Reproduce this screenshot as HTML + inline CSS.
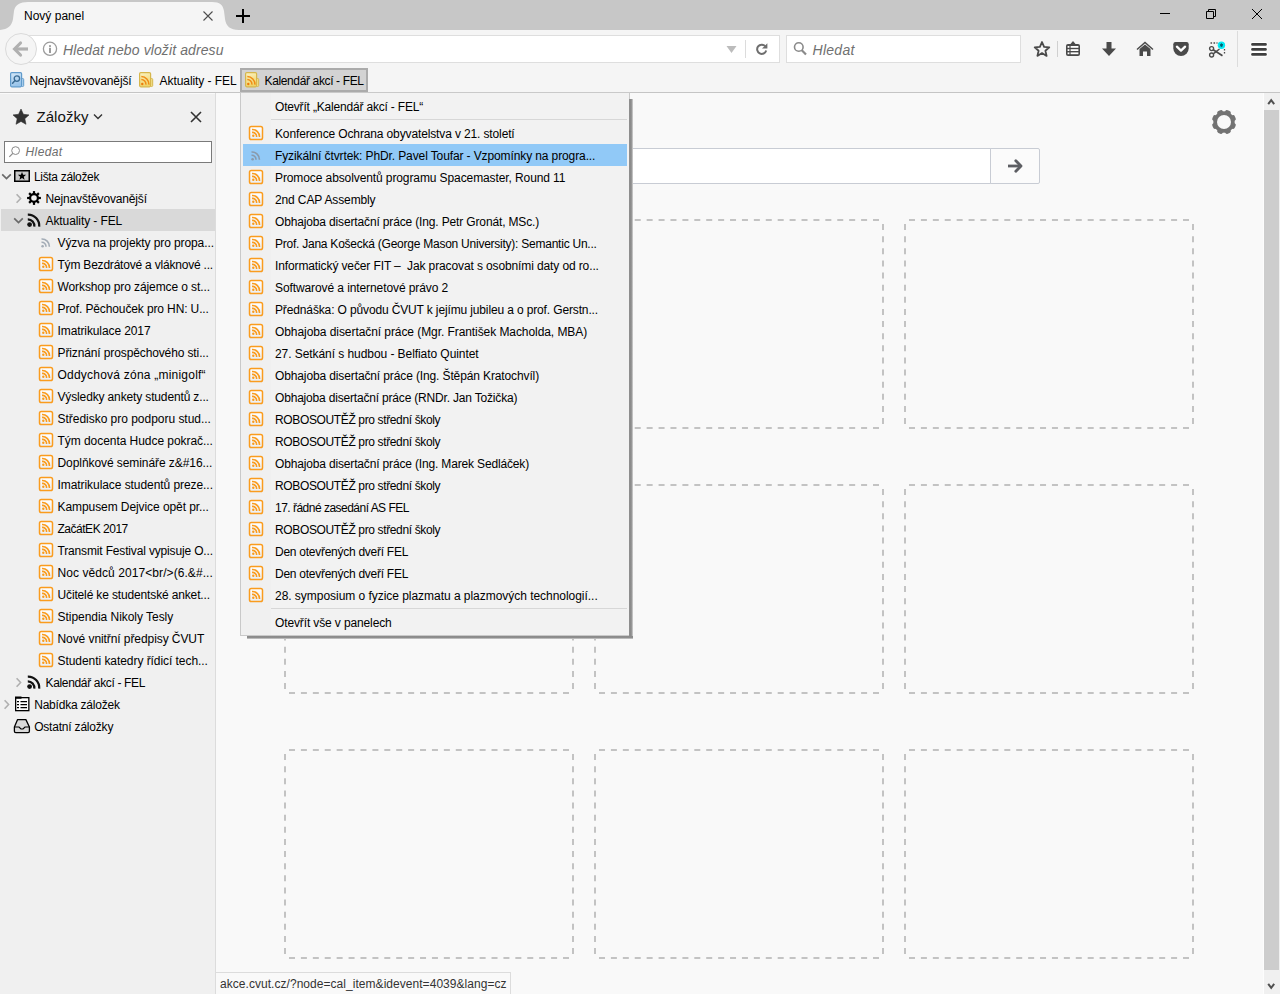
<!DOCTYPE html><html><head><meta charset="utf-8"><title>Nový panel</title><style>
*{box-sizing:border-box}
html,body{margin:0;padding:0;width:1280px;height:994px;overflow:hidden;background:#f9f9f9;font-family:"Liberation Sans",sans-serif;font-size:12px;color:#000}
.a{position:absolute}
svg{display:block;position:absolute;overflow:visible}
.t{position:absolute;white-space:pre;letter-spacing:-0.1px}
.tile{position:absolute;border:2px dashed #c4c4c4;border-radius:4px}
</style></head><body>
<div class="a" style="left:0;top:0;width:1280px;height:30px;background:#c7c7c7"></div>
<div class="a" style="left:0;top:30px;width:1280px;height:62px;background:#f5f5f5"></div>
<div class="a" style="left:0;top:92px;width:1280px;height:1px;background:#c5c5c5"></div>
<div class="a" style="left:0;top:93px;width:215px;height:901px;background:#f0f0f0"></div>
<div class="a" style="left:215px;top:93px;width:1px;height:901px;background:#dcdcdc"></div>
<div class="a" style="left:216px;top:93px;width:1048px;height:901px;background:#f9f9f9"></div>
<svg width="1280" height="30" style="left:0;top:0"><path d="M-2,30 C7,30 12,26 13,19 L14,11 C15,5 20,2 28,2 L212,2 C220,2 223,5 224,11 L225,19 C226,26 230,30 239,30 Z" fill="#f5f5f5"/></svg>
<div class="t" style="left:24px;top:10.04px;font-size:12px;line-height:12px;color:#000;letter-spacing:0.005px">Nový panel</div>
<svg width="12" height="12" style="left:202px;top:10px"><path d="M1.5,1.5 L10.5,10.5 M10.5,1.5 L1.5,10.5" stroke="#4d4d4d" stroke-width="1.1"/></svg>
<svg width="16" height="16" style="left:235px;top:8px"><path d="M1,8 H15 M8,1 V15" stroke="#000" stroke-width="2"/></svg>
<svg width="12" height="12" style="left:1159px;top:8px"><path d="M1,5.5 H11" stroke="#000" stroke-width="1"/></svg>
<svg width="14" height="14" style="left:1205px;top:8px"><path d="M1.5,3.5 H8.5 V10.5 H1.5 Z M3.5,3.5 V1.5 H10.5 V8.5 H8.5" stroke="#000" stroke-width="1" fill="none"/></svg>
<svg width="12" height="12" style="left:1251px;top:8px"><path d="M1,1 L11,11 M11,1 L1,11" stroke="#000" stroke-width="1"/></svg>
<div class="a" style="left:20px;top:35px;width:760px;height:28px;background:#fff;border:1px solid #dedede"></div>
<div class="a" style="left:5px;top:33px;width:32px;height:32px;border-radius:50%;background:#f5f5f5;border:1px solid #dadada"></div>
<svg width="18" height="18" style="left:12px;top:40px"><path d="M3,9 H16" stroke="#b0b0b0" stroke-width="3.2"/><path d="M8.5,3 L2.6,9 L8.5,15" stroke="#b0b0b0" stroke-width="3.2" fill="none" stroke-linecap="round" stroke-linejoin="miter"/></svg>
<svg width="16" height="16" style="left:42px;top:41px"><circle cx="8" cy="7.8" r="6.6" stroke="#9c9c9c" stroke-width="1.3" fill="none"/><rect x="7" y="6.8" width="2" height="5.2" fill="#9c9c9c"/><rect x="7" y="4.2" width="2" height="1.7" fill="#9c9c9c"/></svg>
<div class="t" style="left:63px;top:43.45px;font-size:14px;line-height:14px;color:#707070;font-style:italic;letter-spacing:0.104px">Hledat nebo vložit adresu</div>
<svg width="12" height="10" style="left:726px;top:45px"><path d="M0.5,1 H10.5 L5.5,8 Z" fill="#bcbcbc"/></svg>
<div class="a" style="left:745px;top:40px;width:1px;height:18px;background:#dcdcdc"></div>
<svg width="14" height="14" style="left:755px;top:42px"><path d="M10.2,4.2 A4.6,4.6 0 1 0 11.2,8.5" stroke="#6e6e6e" stroke-width="2" fill="none"/><path d="M12.4,1.2 V6.6 H7 Z" fill="#6e6e6e"/></svg>
<div class="a" style="left:786px;top:35px;width:235px;height:28px;background:#fff;border:1px solid #dedede"></div>
<svg width="16" height="16" style="left:792px;top:41px"><circle cx="6.8" cy="6" r="4.3" stroke="#8a8a8a" stroke-width="1.6" fill="none"/><path d="M9.8,9.2 L14,13.5" stroke="#8a8a8a" stroke-width="2.2"/></svg>
<div class="t" style="left:812.5px;top:43.45px;font-size:14px;line-height:14px;color:#707070;font-style:italic;letter-spacing:0.272px">Hledat</div>
<svg width="18" height="18" style="left:1033px;top:40px"><path d="M9,2 L11.1,6.9 L16.3,7.3 L12.4,10.7 L13.6,15.9 L9,13.1 L4.4,15.9 L5.6,10.7 L1.7,7.3 L6.9,6.9 Z" stroke="#4a4a4a" stroke-width="1.8" fill="none" stroke-linejoin="round"/></svg>
<div class="a" style="left:1057px;top:41px;width:1px;height:16px;background:#d0d0d0"></div>
<svg width="16" height="18" style="left:1065px;top:40px"><path d="M5.5,4 L8,1 L10.5,4 Z" fill="#4a4a4a"/><rect x="1" y="4" width="14" height="12" rx="2" fill="#4a4a4a"/><rect x="2.6" y="6" width="1.8" height="1.8" fill="#fff"/><rect x="5.6" y="6" width="7.8" height="1.8" fill="#fff"/><rect x="2.6" y="9.2" width="1.8" height="1.8" fill="#fff"/><rect x="5.6" y="9.2" width="7.8" height="1.8" fill="#fff"/><rect x="2.6" y="12.4" width="1.8" height="1.8" fill="#fff"/><rect x="5.6" y="12.4" width="7.8" height="1.8" fill="#fff"/></svg>
<svg width="16" height="16" style="left:1101px;top:41px"><path d="M5.5,1 H10.5 V7.5 H15 L8,15 L1,7.5 H5.5 Z" fill="#4a4a4a"/></svg>
<svg width="18" height="16" style="left:1136px;top:41px"><path d="M1,8.5 L9,1.5 L17,8.5" stroke="#4a4a4a" stroke-width="1.5" fill="none"/><path d="M3.5,8 L9,3.5 L14.5,8 V15 H11 V10.5 H7 V15 H3.5 Z" fill="#4a4a4a"/></svg>
<svg width="18" height="16" style="left:1172px;top:41px"><path d="M1.3,3.2 Q1.3,1 3.5,1 H14.5 Q16.7,1 16.7,3.2 V7.3 A7.7,7.7 0 0 1 1.3,7.3 Z" fill="#4a4a4a"/><path d="M4.9,5.7 L9,9.6 L13.1,5.7" stroke="#fff" stroke-width="2.3" fill="none" stroke-linecap="round" stroke-linejoin="round"/></svg>
<svg width="20" height="18" style="left:1208px;top:40px"><circle cx="3.6" cy="8.6" r="2" stroke="#4a4a4a" stroke-width="1.4" fill="none"/><circle cx="3.6" cy="15" r="2" stroke="#4a4a4a" stroke-width="1.4" fill="none"/><path d="M5.2,13.8 L11.5,9" stroke="#4a4a4a" stroke-width="1.5"/><path d="M5.2,9.8 L14.5,15.8" stroke="#4a4a4a" stroke-width="1.7"/><path d="M2.5,3 H9.5" stroke="#4a4a4a" stroke-width="1.4" stroke-dasharray="1.6 1.4"/><path d="M16.5,9 V13.5" stroke="#4a4a4a" stroke-width="1.3" stroke-dasharray="1.5 1.5"/><circle cx="13.4" cy="5.2" r="3.7" fill="#00eaf5"/><path d="M13.4,3.3 V7.1 M11.75,4.25 L15.05,6.15 M11.75,6.15 L15.05,4.25" stroke="#035a6b" stroke-width="1"/></svg>
<div class="a" style="left:1237px;top:31px;width:1px;height:36px;background:#dcdcdc"></div>
<svg width="18" height="16" style="left:1250px;top:41px"><path d="M2.5,3.4 H15.5 M2.5,8.4 H15.5 M2.5,13.4 H15.5" stroke="#fff" stroke-width="4.6" stroke-linecap="round"/><path d="M2.5,3.4 H15.5 M2.5,8.4 H15.5 M2.5,13.4 H15.5" stroke="#3f3f3f" stroke-width="2.8" stroke-linecap="round"/></svg>
<svg width="18" height="18" style="left:10px;top:72px"><defs><linearGradient id="dgnej" x1="0" y1="0" x2="0.3" y2="1"><stop offset="0" stop-color="#d6e8f8"/><stop offset="1" stop-color="#98c4ea"/></linearGradient></defs><rect x="11.5" y="6.5" width="2.2" height="8" rx="1" fill="#b8d8f2" stroke="#5f9acb" stroke-width="1"/><rect x="0.6" y="0.6" width="11" height="14.2" rx="1.2" fill="url(#dgnej)" stroke="#5f9acb" stroke-width="1.2"/><circle cx="6.9" cy="6.6" r="2.7" stroke="#3a6b93" stroke-width="1.3" fill="none"/><path d="M5,8.6 L2.6,11.2" stroke="#3a6b93" stroke-width="1.5" stroke-linecap="round"/></svg>
<div class="t" style="left:29.5px;top:75.14px;font-size:12px;line-height:12px;color:#000;letter-spacing:-0.109px">Nejnavštěvovanější</div>
<svg width="18" height="18" style="left:139px;top:72px"><defs><linearGradient id="dgf139" x1="0" y1="0" x2="0.3" y2="1"><stop offset="0" stop-color="#fbf4c6"/><stop offset="1" stop-color="#efd46a"/></linearGradient></defs><rect x="11.5" y="6.5" width="2.2" height="8" rx="1" fill="#f5e38e" stroke="#d6b64c" stroke-width="1"/><rect x="0.6" y="0.6" width="11" height="14.2" rx="1.2" fill="url(#dgf139)" stroke="#d6b64c" stroke-width="1.2"/><circle cx="3.3" cy="12" r="1.2" fill="#ec7a0c"/><path d="M2.3,7.6 A4.6,4.6 0 0 1 6.9,12.6 M2.3,4.6 A7.6,7.6 0 0 1 9.9,12.6" stroke="#f08c16" stroke-width="1.5" fill="none"/></svg>
<div class="t" style="left:159.5px;top:75.14px;font-size:12px;line-height:12px;color:#000;letter-spacing:-0.062px">Aktuality - FEL</div>
<div class="a" style="left:240px;top:68px;width:128px;height:24px;background:#d3d3d3;border:2px solid #ababab"></div>
<svg width="18" height="18" style="left:245px;top:72px"><defs><linearGradient id="dgf245" x1="0" y1="0" x2="0.3" y2="1"><stop offset="0" stop-color="#fbf4c6"/><stop offset="1" stop-color="#efd46a"/></linearGradient></defs><rect x="11.5" y="6.5" width="2.2" height="8" rx="1" fill="#f5e38e" stroke="#d6b64c" stroke-width="1"/><rect x="0.6" y="0.6" width="11" height="14.2" rx="1.2" fill="url(#dgf245)" stroke="#d6b64c" stroke-width="1.2"/><circle cx="3.3" cy="12" r="1.2" fill="#ec7a0c"/><path d="M2.3,7.6 A4.6,4.6 0 0 1 6.9,12.6 M2.3,4.6 A7.6,7.6 0 0 1 9.9,12.6" stroke="#f08c16" stroke-width="1.5" fill="none"/></svg>
<div class="t" style="left:264.5px;top:75.14px;font-size:12px;line-height:12px;color:#000;letter-spacing:-0.366px">Kalendář akcí - FEL</div>
<div class="a" style="left:0;top:93px;width:215px;height:1px;background:#fafafa"></div>
<svg width="18" height="18" style="left:12px;top:108px"><path d="M9,1 L11.4,6.3 L17,6.9 L12.8,10.7 L14,16.3 L9,13.4 L4,16.3 L5.2,10.7 L1,6.9 L6.6,6.3 Z" fill="#333" stroke="#333" stroke-width="0.6" stroke-linejoin="round"/></svg>
<div class="t" style="left:36.5px;top:109.3px;font-size:15px;line-height:15px;color:#111;letter-spacing:0.059px">Záložky</div>
<svg width="10" height="8" style="left:93px;top:113px"><path d="M1,1.5 L5,5.5 L9,1.5" stroke="#333" stroke-width="1.4" fill="none"/></svg>
<svg width="12" height="12" style="left:190px;top:111px"><path d="M1,1 L11,11 M11,1 L1,11" stroke="#333" stroke-width="1.6"/></svg>
<div class="a" style="left:4px;top:141px;width:208px;height:22px;background:#fff;border:1px solid #7a7a7a"></div>
<svg width="14" height="14" style="left:8px;top:145px"><circle cx="7.6" cy="5.6" r="3.9" stroke="#8a8a8a" stroke-width="1" fill="none"/><path d="M4.8,8.4 L1.3,11.9" stroke="#8a8a8a" stroke-width="1.2"/></svg>
<div class="t" style="left:25.5px;top:146.24px;font-size:12px;line-height:12px;color:#6d6d6d;font-style:italic;letter-spacing:0.402px">Hledat</div>
<svg width="12" height="8" style="left:1px;top:173px"><path d="M1.2,1.4 L5.5,5.6 L9.8,1.4" stroke="#6a6a6a" stroke-width="1.7" fill="none"/></svg>
<svg width="18" height="14" style="left:13px;top:169px"><rect x="1.75" y="1.75" width="14.5" height="10.5" fill="#cacaca" stroke="#000" stroke-width="1.5"/><path d="M9.00,2.90 L10.12,5.66 L13.09,5.87 L10.81,7.79 L11.53,10.68 L9.00,9.10 L6.47,10.68 L7.19,7.79 L4.91,5.87 L7.88,5.66 Z" fill="#000"/></svg>
<div class="t" style="left:34px;top:171.14px;font-size:12px;line-height:12px;color:#000;letter-spacing:-0.329px">Lišta záložek</div>
<svg width="8" height="12" style="left:15px;top:193px"><path d="M1.6,1.2 L5.6,5.5 L1.6,9.8" stroke="#b0b0b0" stroke-width="1.6" fill="none"/></svg>
<svg width="16" height="16" style="left:26px;top:191px"><g transform="translate(8,7)"><circle r="3.9" fill="none" stroke="#000" stroke-width="2.2"/><rect x="-1.1" y="-6.9" width="2.2" height="3" fill="#000" transform="rotate(0)"/><rect x="-1.1" y="-6.9" width="2.2" height="3" fill="#000" transform="rotate(45)"/><rect x="-1.1" y="-6.9" width="2.2" height="3" fill="#000" transform="rotate(90)"/><rect x="-1.1" y="-6.9" width="2.2" height="3" fill="#000" transform="rotate(135)"/><rect x="-1.1" y="-6.9" width="2.2" height="3" fill="#000" transform="rotate(180)"/><rect x="-1.1" y="-6.9" width="2.2" height="3" fill="#000" transform="rotate(225)"/><rect x="-1.1" y="-6.9" width="2.2" height="3" fill="#000" transform="rotate(270)"/><rect x="-1.1" y="-6.9" width="2.2" height="3" fill="#000" transform="rotate(315)"/></g></svg>
<div class="t" style="left:45.5px;top:193.14px;font-size:12px;line-height:12px;color:#000;letter-spacing:-0.148px">Nejnavštěvovanější</div>
<div class="a" style="left:1px;top:209px;width:214px;height:22px;background:#d9d9d9"></div>
<svg width="12" height="8" style="left:13px;top:217px"><path d="M1.2,1.4 L5.5,5.6 L9.8,1.4" stroke="#6a6a6a" stroke-width="1.7" fill="none"/></svg>
<svg width="16" height="16" style="left:26px;top:213px"><circle cx="3.6" cy="11.6" r="2.4" fill="#111"/><path d="M1.8,6.3 A6.5,6.5 0 0 1 8.3,13.6 M1.8,1.6 A11.2,11.2 0 0 1 13.2,13.6" stroke="#111" stroke-width="2.2" fill="none"/></svg>
<div class="t" style="left:45.5px;top:215.14px;font-size:12px;line-height:12px;color:#000;letter-spacing:-0.089px">Aktuality - FEL</div>
<svg width="10" height="10" style="left:41px;top:238px"><circle cx="1.6" cy="8.2" r="1.3" fill="#a3acb6"/><path d="M0.5,4.3 A4.2,4.2 0 0 1 5,8.8 M0.5,1 A7.5,7.5 0 0 1 8.4,8.8" stroke="#a3acb6" stroke-width="1.6" fill="none"/></svg>
<div class="t" style="left:57.5px;top:237.14px;font-size:12px;line-height:12px;color:#000;letter-spacing:-0.101px">Výzva na projekty pro propa...</div>
<svg width="16" height="16" style="left:38px;top:256px"><defs><linearGradient id="fg38_256" x1="0" y1="0" x2="0" y2="1"><stop offset="0" stop-color="#ffffff"/><stop offset="1" stop-color="#e9eef4"/></linearGradient></defs><rect x="1.5" y="1.5" width="13" height="13" rx="1.8" fill="url(#fg38_256)" stroke="#fa9c1e" stroke-width="1.5"/><circle cx="5.3" cy="10.8" r="1.2" fill="#fa9c1e"/><path d="M4,7.4 A4.2,4.2 0 0 1 8.6,12 M4,4.5 A7.2,7.2 0 0 1 11.5,12" stroke="#fa9c1e" stroke-width="1.6" fill="none"/></svg>
<div class="t" style="left:57.5px;top:259.14px;font-size:12px;line-height:12px;color:#000;letter-spacing:-0.207px">Tým Bezdrátové a vláknové ...</div>
<svg width="16" height="16" style="left:38px;top:278px"><defs><linearGradient id="fg38_278" x1="0" y1="0" x2="0" y2="1"><stop offset="0" stop-color="#ffffff"/><stop offset="1" stop-color="#e9eef4"/></linearGradient></defs><rect x="1.5" y="1.5" width="13" height="13" rx="1.8" fill="url(#fg38_278)" stroke="#fa9c1e" stroke-width="1.5"/><circle cx="5.3" cy="10.8" r="1.2" fill="#fa9c1e"/><path d="M4,7.4 A4.2,4.2 0 0 1 8.6,12 M4,4.5 A7.2,7.2 0 0 1 11.5,12" stroke="#fa9c1e" stroke-width="1.6" fill="none"/></svg>
<div class="t" style="left:57.5px;top:281.14px;font-size:12px;line-height:12px;color:#000;letter-spacing:-0.1px">Workshop pro zájemce o st...</div>
<svg width="16" height="16" style="left:38px;top:300px"><defs><linearGradient id="fg38_300" x1="0" y1="0" x2="0" y2="1"><stop offset="0" stop-color="#ffffff"/><stop offset="1" stop-color="#e9eef4"/></linearGradient></defs><rect x="1.5" y="1.5" width="13" height="13" rx="1.8" fill="url(#fg38_300)" stroke="#fa9c1e" stroke-width="1.5"/><circle cx="5.3" cy="10.8" r="1.2" fill="#fa9c1e"/><path d="M4,7.4 A4.2,4.2 0 0 1 8.6,12 M4,4.5 A7.2,7.2 0 0 1 11.5,12" stroke="#fa9c1e" stroke-width="1.6" fill="none"/></svg>
<div class="t" style="left:57.5px;top:303.14px;font-size:12px;line-height:12px;color:#000;letter-spacing:-0.123px">Prof. Pěchouček pro HN: U...</div>
<svg width="16" height="16" style="left:38px;top:322px"><defs><linearGradient id="fg38_322" x1="0" y1="0" x2="0" y2="1"><stop offset="0" stop-color="#ffffff"/><stop offset="1" stop-color="#e9eef4"/></linearGradient></defs><rect x="1.5" y="1.5" width="13" height="13" rx="1.8" fill="url(#fg38_322)" stroke="#fa9c1e" stroke-width="1.5"/><circle cx="5.3" cy="10.8" r="1.2" fill="#fa9c1e"/><path d="M4,7.4 A4.2,4.2 0 0 1 8.6,12 M4,4.5 A7.2,7.2 0 0 1 11.5,12" stroke="#fa9c1e" stroke-width="1.6" fill="none"/></svg>
<div class="t" style="left:57.5px;top:325.14px;font-size:12px;line-height:12px;color:#000;letter-spacing:-0.101px">Imatrikulace 2017</div>
<svg width="16" height="16" style="left:38px;top:344px"><defs><linearGradient id="fg38_344" x1="0" y1="0" x2="0" y2="1"><stop offset="0" stop-color="#ffffff"/><stop offset="1" stop-color="#e9eef4"/></linearGradient></defs><rect x="1.5" y="1.5" width="13" height="13" rx="1.8" fill="url(#fg38_344)" stroke="#fa9c1e" stroke-width="1.5"/><circle cx="5.3" cy="10.8" r="1.2" fill="#fa9c1e"/><path d="M4,7.4 A4.2,4.2 0 0 1 8.6,12 M4,4.5 A7.2,7.2 0 0 1 11.5,12" stroke="#fa9c1e" stroke-width="1.6" fill="none"/></svg>
<div class="t" style="left:57.5px;top:347.14px;font-size:12px;line-height:12px;color:#000;letter-spacing:-0.12px">Přiznání prospěchového sti...</div>
<svg width="16" height="16" style="left:38px;top:366px"><defs><linearGradient id="fg38_366" x1="0" y1="0" x2="0" y2="1"><stop offset="0" stop-color="#ffffff"/><stop offset="1" stop-color="#e9eef4"/></linearGradient></defs><rect x="1.5" y="1.5" width="13" height="13" rx="1.8" fill="url(#fg38_366)" stroke="#fa9c1e" stroke-width="1.5"/><circle cx="5.3" cy="10.8" r="1.2" fill="#fa9c1e"/><path d="M4,7.4 A4.2,4.2 0 0 1 8.6,12 M4,4.5 A7.2,7.2 0 0 1 11.5,12" stroke="#fa9c1e" stroke-width="1.6" fill="none"/></svg>
<div class="t" style="left:57.5px;top:369.14px;font-size:12px;line-height:12px;color:#000;letter-spacing:0.223px">Oddychová zóna „minigolf“</div>
<svg width="16" height="16" style="left:38px;top:388px"><defs><linearGradient id="fg38_388" x1="0" y1="0" x2="0" y2="1"><stop offset="0" stop-color="#ffffff"/><stop offset="1" stop-color="#e9eef4"/></linearGradient></defs><rect x="1.5" y="1.5" width="13" height="13" rx="1.8" fill="url(#fg38_388)" stroke="#fa9c1e" stroke-width="1.5"/><circle cx="5.3" cy="10.8" r="1.2" fill="#fa9c1e"/><path d="M4,7.4 A4.2,4.2 0 0 1 8.6,12 M4,4.5 A7.2,7.2 0 0 1 11.5,12" stroke="#fa9c1e" stroke-width="1.6" fill="none"/></svg>
<div class="t" style="left:57.5px;top:391.14px;font-size:12px;line-height:12px;color:#000;letter-spacing:-0.142px">Výsledky ankety studentů z...</div>
<svg width="16" height="16" style="left:38px;top:410px"><defs><linearGradient id="fg38_410" x1="0" y1="0" x2="0" y2="1"><stop offset="0" stop-color="#ffffff"/><stop offset="1" stop-color="#e9eef4"/></linearGradient></defs><rect x="1.5" y="1.5" width="13" height="13" rx="1.8" fill="url(#fg38_410)" stroke="#fa9c1e" stroke-width="1.5"/><circle cx="5.3" cy="10.8" r="1.2" fill="#fa9c1e"/><path d="M4,7.4 A4.2,4.2 0 0 1 8.6,12 M4,4.5 A7.2,7.2 0 0 1 11.5,12" stroke="#fa9c1e" stroke-width="1.6" fill="none"/></svg>
<div class="t" style="left:57.5px;top:413.14px;font-size:12px;line-height:12px;color:#000;letter-spacing:-0.024px">Středisko pro podporu stud...</div>
<svg width="16" height="16" style="left:38px;top:432px"><defs><linearGradient id="fg38_432" x1="0" y1="0" x2="0" y2="1"><stop offset="0" stop-color="#ffffff"/><stop offset="1" stop-color="#e9eef4"/></linearGradient></defs><rect x="1.5" y="1.5" width="13" height="13" rx="1.8" fill="url(#fg38_432)" stroke="#fa9c1e" stroke-width="1.5"/><circle cx="5.3" cy="10.8" r="1.2" fill="#fa9c1e"/><path d="M4,7.4 A4.2,4.2 0 0 1 8.6,12 M4,4.5 A7.2,7.2 0 0 1 11.5,12" stroke="#fa9c1e" stroke-width="1.6" fill="none"/></svg>
<div class="t" style="left:57.5px;top:435.14px;font-size:12px;line-height:12px;color:#000;letter-spacing:-0.05px">Tým docenta Hudce pokrač...</div>
<svg width="16" height="16" style="left:38px;top:454px"><defs><linearGradient id="fg38_454" x1="0" y1="0" x2="0" y2="1"><stop offset="0" stop-color="#ffffff"/><stop offset="1" stop-color="#e9eef4"/></linearGradient></defs><rect x="1.5" y="1.5" width="13" height="13" rx="1.8" fill="url(#fg38_454)" stroke="#fa9c1e" stroke-width="1.5"/><circle cx="5.3" cy="10.8" r="1.2" fill="#fa9c1e"/><path d="M4,7.4 A4.2,4.2 0 0 1 8.6,12 M4,4.5 A7.2,7.2 0 0 1 11.5,12" stroke="#fa9c1e" stroke-width="1.6" fill="none"/></svg>
<div class="t" style="left:57.5px;top:457.14px;font-size:12px;line-height:12px;color:#000;letter-spacing:-0.072px">Doplňkové semináře z&amp;#16...</div>
<svg width="16" height="16" style="left:38px;top:476px"><defs><linearGradient id="fg38_476" x1="0" y1="0" x2="0" y2="1"><stop offset="0" stop-color="#ffffff"/><stop offset="1" stop-color="#e9eef4"/></linearGradient></defs><rect x="1.5" y="1.5" width="13" height="13" rx="1.8" fill="url(#fg38_476)" stroke="#fa9c1e" stroke-width="1.5"/><circle cx="5.3" cy="10.8" r="1.2" fill="#fa9c1e"/><path d="M4,7.4 A4.2,4.2 0 0 1 8.6,12 M4,4.5 A7.2,7.2 0 0 1 11.5,12" stroke="#fa9c1e" stroke-width="1.6" fill="none"/></svg>
<div class="t" style="left:57.5px;top:479.14px;font-size:12px;line-height:12px;color:#000;letter-spacing:-0.067px">Imatrikulace studentů preze...</div>
<svg width="16" height="16" style="left:38px;top:498px"><defs><linearGradient id="fg38_498" x1="0" y1="0" x2="0" y2="1"><stop offset="0" stop-color="#ffffff"/><stop offset="1" stop-color="#e9eef4"/></linearGradient></defs><rect x="1.5" y="1.5" width="13" height="13" rx="1.8" fill="url(#fg38_498)" stroke="#fa9c1e" stroke-width="1.5"/><circle cx="5.3" cy="10.8" r="1.2" fill="#fa9c1e"/><path d="M4,7.4 A4.2,4.2 0 0 1 8.6,12 M4,4.5 A7.2,7.2 0 0 1 11.5,12" stroke="#fa9c1e" stroke-width="1.6" fill="none"/></svg>
<div class="t" style="left:57.5px;top:501.14px;font-size:12px;line-height:12px;color:#000;letter-spacing:-0.078px">Kampusem Dejvice opět pr...</div>
<svg width="16" height="16" style="left:38px;top:520px"><defs><linearGradient id="fg38_520" x1="0" y1="0" x2="0" y2="1"><stop offset="0" stop-color="#ffffff"/><stop offset="1" stop-color="#e9eef4"/></linearGradient></defs><rect x="1.5" y="1.5" width="13" height="13" rx="1.8" fill="url(#fg38_520)" stroke="#fa9c1e" stroke-width="1.5"/><circle cx="5.3" cy="10.8" r="1.2" fill="#fa9c1e"/><path d="M4,7.4 A4.2,4.2 0 0 1 8.6,12 M4,4.5 A7.2,7.2 0 0 1 11.5,12" stroke="#fa9c1e" stroke-width="1.6" fill="none"/></svg>
<div class="t" style="left:57.5px;top:523.14px;font-size:12px;line-height:12px;color:#000;letter-spacing:-0.48px">ZačátEK 2017</div>
<svg width="16" height="16" style="left:38px;top:542px"><defs><linearGradient id="fg38_542" x1="0" y1="0" x2="0" y2="1"><stop offset="0" stop-color="#ffffff"/><stop offset="1" stop-color="#e9eef4"/></linearGradient></defs><rect x="1.5" y="1.5" width="13" height="13" rx="1.8" fill="url(#fg38_542)" stroke="#fa9c1e" stroke-width="1.5"/><circle cx="5.3" cy="10.8" r="1.2" fill="#fa9c1e"/><path d="M4,7.4 A4.2,4.2 0 0 1 8.6,12 M4,4.5 A7.2,7.2 0 0 1 11.5,12" stroke="#fa9c1e" stroke-width="1.6" fill="none"/></svg>
<div class="t" style="left:57.5px;top:545.14px;font-size:12px;line-height:12px;color:#000;letter-spacing:-0.157px">Transmit Festival vypisuje O...</div>
<svg width="16" height="16" style="left:38px;top:564px"><defs><linearGradient id="fg38_564" x1="0" y1="0" x2="0" y2="1"><stop offset="0" stop-color="#ffffff"/><stop offset="1" stop-color="#e9eef4"/></linearGradient></defs><rect x="1.5" y="1.5" width="13" height="13" rx="1.8" fill="url(#fg38_564)" stroke="#fa9c1e" stroke-width="1.5"/><circle cx="5.3" cy="10.8" r="1.2" fill="#fa9c1e"/><path d="M4,7.4 A4.2,4.2 0 0 1 8.6,12 M4,4.5 A7.2,7.2 0 0 1 11.5,12" stroke="#fa9c1e" stroke-width="1.6" fill="none"/></svg>
<div class="t" style="left:57.5px;top:567.14px;font-size:12px;line-height:12px;color:#000;letter-spacing:0.073px">Noc vědců 2017&lt;br/&gt;(6.&amp;#...</div>
<svg width="16" height="16" style="left:38px;top:586px"><defs><linearGradient id="fg38_586" x1="0" y1="0" x2="0" y2="1"><stop offset="0" stop-color="#ffffff"/><stop offset="1" stop-color="#e9eef4"/></linearGradient></defs><rect x="1.5" y="1.5" width="13" height="13" rx="1.8" fill="url(#fg38_586)" stroke="#fa9c1e" stroke-width="1.5"/><circle cx="5.3" cy="10.8" r="1.2" fill="#fa9c1e"/><path d="M4,7.4 A4.2,4.2 0 0 1 8.6,12 M4,4.5 A7.2,7.2 0 0 1 11.5,12" stroke="#fa9c1e" stroke-width="1.6" fill="none"/></svg>
<div class="t" style="left:57.5px;top:589.14px;font-size:12px;line-height:12px;color:#000;letter-spacing:-0.145px">Učitelé ke studentské anket...</div>
<svg width="16" height="16" style="left:38px;top:608px"><defs><linearGradient id="fg38_608" x1="0" y1="0" x2="0" y2="1"><stop offset="0" stop-color="#ffffff"/><stop offset="1" stop-color="#e9eef4"/></linearGradient></defs><rect x="1.5" y="1.5" width="13" height="13" rx="1.8" fill="url(#fg38_608)" stroke="#fa9c1e" stroke-width="1.5"/><circle cx="5.3" cy="10.8" r="1.2" fill="#fa9c1e"/><path d="M4,7.4 A4.2,4.2 0 0 1 8.6,12 M4,4.5 A7.2,7.2 0 0 1 11.5,12" stroke="#fa9c1e" stroke-width="1.6" fill="none"/></svg>
<div class="t" style="left:57.5px;top:611.14px;font-size:12px;line-height:12px;color:#000;letter-spacing:-0.037px">Stipendia Nikoly Tesly</div>
<svg width="16" height="16" style="left:38px;top:630px"><defs><linearGradient id="fg38_630" x1="0" y1="0" x2="0" y2="1"><stop offset="0" stop-color="#ffffff"/><stop offset="1" stop-color="#e9eef4"/></linearGradient></defs><rect x="1.5" y="1.5" width="13" height="13" rx="1.8" fill="url(#fg38_630)" stroke="#fa9c1e" stroke-width="1.5"/><circle cx="5.3" cy="10.8" r="1.2" fill="#fa9c1e"/><path d="M4,7.4 A4.2,4.2 0 0 1 8.6,12 M4,4.5 A7.2,7.2 0 0 1 11.5,12" stroke="#fa9c1e" stroke-width="1.6" fill="none"/></svg>
<div class="t" style="left:57.5px;top:633.14px;font-size:12px;line-height:12px;color:#000;letter-spacing:-0.078px">Nové vnitřní předpisy ČVUT</div>
<svg width="16" height="16" style="left:38px;top:652px"><defs><linearGradient id="fg38_652" x1="0" y1="0" x2="0" y2="1"><stop offset="0" stop-color="#ffffff"/><stop offset="1" stop-color="#e9eef4"/></linearGradient></defs><rect x="1.5" y="1.5" width="13" height="13" rx="1.8" fill="url(#fg38_652)" stroke="#fa9c1e" stroke-width="1.5"/><circle cx="5.3" cy="10.8" r="1.2" fill="#fa9c1e"/><path d="M4,7.4 A4.2,4.2 0 0 1 8.6,12 M4,4.5 A7.2,7.2 0 0 1 11.5,12" stroke="#fa9c1e" stroke-width="1.6" fill="none"/></svg>
<div class="t" style="left:57.5px;top:655.14px;font-size:12px;line-height:12px;color:#000;letter-spacing:-0.054px">Studenti katedry řídicí tech...</div>
<svg width="8" height="12" style="left:15px;top:677px"><path d="M1.6,1.2 L5.6,5.5 L1.6,9.8" stroke="#b0b0b0" stroke-width="1.6" fill="none"/></svg>
<svg width="16" height="16" style="left:26px;top:675px"><circle cx="3.6" cy="11.6" r="2.4" fill="#111"/><path d="M1.8,6.3 A6.5,6.5 0 0 1 8.3,13.6 M1.8,1.6 A11.2,11.2 0 0 1 13.2,13.6" stroke="#111" stroke-width="2.2" fill="none"/></svg>
<div class="t" style="left:45.5px;top:677.14px;font-size:12px;line-height:12px;color:#000;letter-spacing:-0.34px">Kalendář akcí - FEL</div>
<svg width="8" height="12" style="left:3px;top:699px"><path d="M1.6,1.2 L5.6,5.5 L1.6,9.8" stroke="#b0b0b0" stroke-width="1.6" fill="none"/></svg>
<svg width="18" height="16" style="left:14px;top:696px"><rect x="1.65" y="1.65" width="13.2" height="13" fill="#fff" stroke="#000" stroke-width="1.3"/><path d="M1,1.6 H7.5" stroke="#000" stroke-width="2.2"/><path d="M3,5.6 H5 M6.5,5.6 H13 M3,8.6 H5 M6.5,8.6 H13 M3,11.6 H5 M6.5,11.6 H13" stroke="#000" stroke-width="1.1"/></svg>
<div class="t" style="left:34.2px;top:699.14px;font-size:12px;line-height:12px;color:#000;letter-spacing:-0.215px">Nabídka záložek</div>
<svg width="18" height="16" style="left:13px;top:718px"><path d="M4.6,1.6 H12.9 L16.4,9 V13.2 Q16.4,14.6 15,14.6 H2.8 Q1.4,14.6 1.4,13.2 V9 Z" fill="#dadada" stroke="#000" stroke-width="1.3" stroke-linejoin="round"/><path d="M1.4,9 H6 L8,11 H10 L12,9 H16.4" fill="none" stroke="#000" stroke-width="1.2"/></svg>
<div class="t" style="left:34.2px;top:721.14px;font-size:12px;line-height:12px;color:#000;letter-spacing:-0.202px">Ostatní záložky</div>
<div class="a" style="left:630px;top:148px;width:361px;height:36px;background:#fff;border:1px solid #c8ccd4;border-right:none"></div>
<div class="a" style="left:990px;top:148px;width:50px;height:36px;background:#fbfbfb;border:1px solid #c8ccd4;border-radius:0 2px 2px 0"></div>
<svg width="18" height="16" style="left:1007px;top:158px"><path d="M1,8 H12" stroke="#5d5e63" stroke-width="2.8"/><path d="M8.8,2.7 L14,8 L8.8,13.3" stroke="#5d5e63" stroke-width="2.8" fill="none" stroke-linecap="round" stroke-linejoin="round"/></svg>
<svg width="30" height="30" style="left:1209px;top:107px"><g transform="translate(15,15)"><circle r="10.7" fill="#737373"/><rect x="-3" y="-12.2" width="6" height="5" rx="2" fill="#737373" transform="rotate(22.5)"/><rect x="-3" y="-12.2" width="6" height="5" rx="2" fill="#737373" transform="rotate(67.5)"/><rect x="-3" y="-12.2" width="6" height="5" rx="2" fill="#737373" transform="rotate(112.5)"/><rect x="-3" y="-12.2" width="6" height="5" rx="2" fill="#737373" transform="rotate(157.5)"/><rect x="-3" y="-12.2" width="6" height="5" rx="2" fill="#737373" transform="rotate(202.5)"/><rect x="-3" y="-12.2" width="6" height="5" rx="2" fill="#737373" transform="rotate(247.5)"/><rect x="-3" y="-12.2" width="6" height="5" rx="2" fill="#737373" transform="rotate(292.5)"/><rect x="-3" y="-12.2" width="6" height="5" rx="2" fill="#737373" transform="rotate(337.5)"/><circle r="7" fill="#f9f9f9"/></g></svg>
<svg width="1280" height="994" style="left:0;top:0"><g stroke="#c3c3c3" stroke-width="2" fill="none"><path d="M289,220 L569,220" stroke-dasharray="6 5.913"/><path d="M289,428 L569,428" stroke-dasharray="6 5.913"/><path d="M285,224 L285,424" stroke-dasharray="6 6.125"/><path d="M573,224 L573,424" stroke-dasharray="6 6.125"/><path d="M599,220 L879,220" stroke-dasharray="6 5.913"/><path d="M599,428 L879,428" stroke-dasharray="6 5.913"/><path d="M595,224 L595,424" stroke-dasharray="6 6.125"/><path d="M883,224 L883,424" stroke-dasharray="6 6.125"/><path d="M909,220 L1189,220" stroke-dasharray="6 5.913"/><path d="M909,428 L1189,428" stroke-dasharray="6 5.913"/><path d="M905,224 L905,424" stroke-dasharray="6 6.125"/><path d="M1193,224 L1193,424" stroke-dasharray="6 6.125"/><path d="M289,485 L569,485" stroke-dasharray="6 5.913"/><path d="M289,693 L569,693" stroke-dasharray="6 5.913"/><path d="M285,489 L285,689" stroke-dasharray="6 6.125"/><path d="M573,489 L573,689" stroke-dasharray="6 6.125"/><path d="M599,485 L879,485" stroke-dasharray="6 5.913"/><path d="M599,693 L879,693" stroke-dasharray="6 5.913"/><path d="M595,489 L595,689" stroke-dasharray="6 6.125"/><path d="M883,489 L883,689" stroke-dasharray="6 6.125"/><path d="M909,485 L1189,485" stroke-dasharray="6 5.913"/><path d="M909,693 L1189,693" stroke-dasharray="6 5.913"/><path d="M905,489 L905,689" stroke-dasharray="6 6.125"/><path d="M1193,489 L1193,689" stroke-dasharray="6 6.125"/><path d="M289,750 L569,750" stroke-dasharray="6 5.913"/><path d="M289,958 L569,958" stroke-dasharray="6 5.913"/><path d="M285,754 L285,954" stroke-dasharray="6 6.125"/><path d="M573,754 L573,954" stroke-dasharray="6 6.125"/><path d="M599,750 L879,750" stroke-dasharray="6 5.913"/><path d="M599,958 L879,958" stroke-dasharray="6 5.913"/><path d="M595,754 L595,954" stroke-dasharray="6 6.125"/><path d="M883,754 L883,954" stroke-dasharray="6 6.125"/><path d="M909,750 L1189,750" stroke-dasharray="6 5.913"/><path d="M909,958 L1189,958" stroke-dasharray="6 5.913"/><path d="M905,754 L905,954" stroke-dasharray="6 6.125"/><path d="M1193,754 L1193,954" stroke-dasharray="6 6.125"/></g></svg>
<div class="a" style="left:1263px;top:93px;width:1px;height:901px;background:#fdfdfd"></div>
<div class="a" style="left:1264px;top:93px;width:16px;height:901px;background:#f0f0f0"></div>
<div class="a" style="left:1264px;top:110px;width:15px;height:860px;background:#cdcdcd"></div>
<svg width="10" height="8" style="left:1266px;top:98px"><path d="M2.2,6.2 L5.2,2.2 L8.2,6.2" stroke="#505050" stroke-width="2" fill="none"/></svg>
<svg width="10" height="8" style="left:1266px;top:982px"><path d="M2.2,1.8 L5.2,5.8 L8.2,1.8" stroke="#505050" stroke-width="2" fill="none"/></svg>
<div class="a" style="left:216px;top:972px;width:295px;height:22px;background:#f9f9f9;border-top:1px solid #dcdcdc;border-right:1px solid #dcdcdc"></div>
<div class="t" style="left:220px;top:977.74px;font-size:12px;line-height:12px;color:#333;letter-spacing:0.043px">akce.cvut.cz/?node=cal_item&amp;idevent=4039&amp;lang=cz</div>
<div class="a" style="left:240px;top:92px;width:390px;height:544px;background:#f2f2f2;border:1px solid #c9c9c9"></div>
<div class="a" style="left:241px;top:93px;width:30px;height:542px;background:#f0f0f0"></div>
<div class="a" style="left:629px;top:99px;width:4px;height:539px;background:linear-gradient(to right,#8f8f8f 0,#8a8a8a 55%,#d6d6d6 100%)"></div>
<div class="a" style="left:247px;top:636px;width:386px;height:3px;background:linear-gradient(to bottom,#8a8a8a 0,#8f8f8f 60%,#dadada 100%)"></div>
<div class="t" style="left:275px;top:101.14px;font-size:12px;line-height:12px;color:#000;letter-spacing:-0.182px">Otevřít „Kalendář akcí - FEL“</div>
<div class="a" style="left:271px;top:119px;width:356px;height:1px;background:#d7d7d7"></div>
<svg width="16" height="16" style="left:248px;top:125px"><defs><linearGradient id="fg248_125" x1="0" y1="0" x2="0" y2="1"><stop offset="0" stop-color="#ffffff"/><stop offset="1" stop-color="#e9eef4"/></linearGradient></defs><rect x="1.5" y="1.5" width="13" height="13" rx="1.8" fill="url(#fg248_125)" stroke="#fa9c1e" stroke-width="1.5"/><circle cx="5.3" cy="10.8" r="1.2" fill="#fa9c1e"/><path d="M4,7.4 A4.2,4.2 0 0 1 8.6,12 M4,4.5 A7.2,7.2 0 0 1 11.5,12" stroke="#fa9c1e" stroke-width="1.6" fill="none"/></svg>
<div class="t" style="left:275px;top:127.94px;font-size:12px;line-height:12px;color:#000;letter-spacing:-0.131px">Konference Ochrana obyvatelstva v 21. století</div>
<div class="a" style="left:243px;top:144px;width:384px;height:22px;background:#91c9f7"></div>
<svg width="10" height="10" style="left:251px;top:151px"><circle cx="1.6" cy="8.2" r="1.3" fill="#8a9aab"/><path d="M0.5,4.3 A4.2,4.2 0 0 1 5,8.8 M0.5,1 A7.5,7.5 0 0 1 8.4,8.8" stroke="#8a9aab" stroke-width="1.6" fill="none"/></svg>
<div class="t" style="left:275px;top:149.94px;font-size:12px;line-height:12px;color:#000;letter-spacing:-0.112px">Fyzikální čtvrtek: PhDr. Pavel Toufar - Vzpomínky na progra...</div>
<svg width="16" height="16" style="left:248px;top:169px"><defs><linearGradient id="fg248_169" x1="0" y1="0" x2="0" y2="1"><stop offset="0" stop-color="#ffffff"/><stop offset="1" stop-color="#e9eef4"/></linearGradient></defs><rect x="1.5" y="1.5" width="13" height="13" rx="1.8" fill="url(#fg248_169)" stroke="#fa9c1e" stroke-width="1.5"/><circle cx="5.3" cy="10.8" r="1.2" fill="#fa9c1e"/><path d="M4,7.4 A4.2,4.2 0 0 1 8.6,12 M4,4.5 A7.2,7.2 0 0 1 11.5,12" stroke="#fa9c1e" stroke-width="1.6" fill="none"/></svg>
<div class="t" style="left:275px;top:171.94px;font-size:12px;line-height:12px;color:#000;letter-spacing:-0.1px">Promoce absolventů programu Spacemaster, Round 11</div>
<svg width="16" height="16" style="left:248px;top:191px"><defs><linearGradient id="fg248_191" x1="0" y1="0" x2="0" y2="1"><stop offset="0" stop-color="#ffffff"/><stop offset="1" stop-color="#e9eef4"/></linearGradient></defs><rect x="1.5" y="1.5" width="13" height="13" rx="1.8" fill="url(#fg248_191)" stroke="#fa9c1e" stroke-width="1.5"/><circle cx="5.3" cy="10.8" r="1.2" fill="#fa9c1e"/><path d="M4,7.4 A4.2,4.2 0 0 1 8.6,12 M4,4.5 A7.2,7.2 0 0 1 11.5,12" stroke="#fa9c1e" stroke-width="1.6" fill="none"/></svg>
<div class="t" style="left:275px;top:193.94px;font-size:12px;line-height:12px;color:#000;letter-spacing:-0.125px">2nd CAP Assembly</div>
<svg width="16" height="16" style="left:248px;top:213px"><defs><linearGradient id="fg248_213" x1="0" y1="0" x2="0" y2="1"><stop offset="0" stop-color="#ffffff"/><stop offset="1" stop-color="#e9eef4"/></linearGradient></defs><rect x="1.5" y="1.5" width="13" height="13" rx="1.8" fill="url(#fg248_213)" stroke="#fa9c1e" stroke-width="1.5"/><circle cx="5.3" cy="10.8" r="1.2" fill="#fa9c1e"/><path d="M4,7.4 A4.2,4.2 0 0 1 8.6,12 M4,4.5 A7.2,7.2 0 0 1 11.5,12" stroke="#fa9c1e" stroke-width="1.6" fill="none"/></svg>
<div class="t" style="left:275px;top:215.94px;font-size:12px;line-height:12px;color:#000;letter-spacing:-0.147px">Obhajoba disertační práce (Ing. Petr Gronát, MSc.)</div>
<svg width="16" height="16" style="left:248px;top:235px"><defs><linearGradient id="fg248_235" x1="0" y1="0" x2="0" y2="1"><stop offset="0" stop-color="#ffffff"/><stop offset="1" stop-color="#e9eef4"/></linearGradient></defs><rect x="1.5" y="1.5" width="13" height="13" rx="1.8" fill="url(#fg248_235)" stroke="#fa9c1e" stroke-width="1.5"/><circle cx="5.3" cy="10.8" r="1.2" fill="#fa9c1e"/><path d="M4,7.4 A4.2,4.2 0 0 1 8.6,12 M4,4.5 A7.2,7.2 0 0 1 11.5,12" stroke="#fa9c1e" stroke-width="1.6" fill="none"/></svg>
<div class="t" style="left:275px;top:237.94px;font-size:12px;line-height:12px;color:#000;letter-spacing:-0.242px">Prof. Jana Košecká (George Mason University): Semantic Un...</div>
<svg width="16" height="16" style="left:248px;top:257px"><defs><linearGradient id="fg248_257" x1="0" y1="0" x2="0" y2="1"><stop offset="0" stop-color="#ffffff"/><stop offset="1" stop-color="#e9eef4"/></linearGradient></defs><rect x="1.5" y="1.5" width="13" height="13" rx="1.8" fill="url(#fg248_257)" stroke="#fa9c1e" stroke-width="1.5"/><circle cx="5.3" cy="10.8" r="1.2" fill="#fa9c1e"/><path d="M4,7.4 A4.2,4.2 0 0 1 8.6,12 M4,4.5 A7.2,7.2 0 0 1 11.5,12" stroke="#fa9c1e" stroke-width="1.6" fill="none"/></svg>
<div class="t" style="left:275px;top:259.94px;font-size:12px;line-height:12px;color:#000;letter-spacing:-0.118px">Informatický večer FIT –  Jak pracovat s osobními daty od ro...</div>
<svg width="16" height="16" style="left:248px;top:279px"><defs><linearGradient id="fg248_279" x1="0" y1="0" x2="0" y2="1"><stop offset="0" stop-color="#ffffff"/><stop offset="1" stop-color="#e9eef4"/></linearGradient></defs><rect x="1.5" y="1.5" width="13" height="13" rx="1.8" fill="url(#fg248_279)" stroke="#fa9c1e" stroke-width="1.5"/><circle cx="5.3" cy="10.8" r="1.2" fill="#fa9c1e"/><path d="M4,7.4 A4.2,4.2 0 0 1 8.6,12 M4,4.5 A7.2,7.2 0 0 1 11.5,12" stroke="#fa9c1e" stroke-width="1.6" fill="none"/></svg>
<div class="t" style="left:275px;top:281.94px;font-size:12px;line-height:12px;color:#000;letter-spacing:-0.094px">Softwarové a internetové právo 2</div>
<svg width="16" height="16" style="left:248px;top:301px"><defs><linearGradient id="fg248_301" x1="0" y1="0" x2="0" y2="1"><stop offset="0" stop-color="#ffffff"/><stop offset="1" stop-color="#e9eef4"/></linearGradient></defs><rect x="1.5" y="1.5" width="13" height="13" rx="1.8" fill="url(#fg248_301)" stroke="#fa9c1e" stroke-width="1.5"/><circle cx="5.3" cy="10.8" r="1.2" fill="#fa9c1e"/><path d="M4,7.4 A4.2,4.2 0 0 1 8.6,12 M4,4.5 A7.2,7.2 0 0 1 11.5,12" stroke="#fa9c1e" stroke-width="1.6" fill="none"/></svg>
<div class="t" style="left:275px;top:303.94px;font-size:12px;line-height:12px;color:#000;letter-spacing:-0.136px">Přednáška: O původu ČVUT k jejímu jubileu a o prof. Gerstn...</div>
<svg width="16" height="16" style="left:248px;top:323px"><defs><linearGradient id="fg248_323" x1="0" y1="0" x2="0" y2="1"><stop offset="0" stop-color="#ffffff"/><stop offset="1" stop-color="#e9eef4"/></linearGradient></defs><rect x="1.5" y="1.5" width="13" height="13" rx="1.8" fill="url(#fg248_323)" stroke="#fa9c1e" stroke-width="1.5"/><circle cx="5.3" cy="10.8" r="1.2" fill="#fa9c1e"/><path d="M4,7.4 A4.2,4.2 0 0 1 8.6,12 M4,4.5 A7.2,7.2 0 0 1 11.5,12" stroke="#fa9c1e" stroke-width="1.6" fill="none"/></svg>
<div class="t" style="left:275px;top:325.94px;font-size:12px;line-height:12px;color:#000;letter-spacing:-0.072px">Obhajoba disertační práce (Mgr. František Macholda, MBA)</div>
<svg width="16" height="16" style="left:248px;top:345px"><defs><linearGradient id="fg248_345" x1="0" y1="0" x2="0" y2="1"><stop offset="0" stop-color="#ffffff"/><stop offset="1" stop-color="#e9eef4"/></linearGradient></defs><rect x="1.5" y="1.5" width="13" height="13" rx="1.8" fill="url(#fg248_345)" stroke="#fa9c1e" stroke-width="1.5"/><circle cx="5.3" cy="10.8" r="1.2" fill="#fa9c1e"/><path d="M4,7.4 A4.2,4.2 0 0 1 8.6,12 M4,4.5 A7.2,7.2 0 0 1 11.5,12" stroke="#fa9c1e" stroke-width="1.6" fill="none"/></svg>
<div class="t" style="left:275px;top:347.94px;font-size:12px;line-height:12px;color:#000;letter-spacing:-0.065px">27. Setkání s hudbou - Belfiato Quintet</div>
<svg width="16" height="16" style="left:248px;top:367px"><defs><linearGradient id="fg248_367" x1="0" y1="0" x2="0" y2="1"><stop offset="0" stop-color="#ffffff"/><stop offset="1" stop-color="#e9eef4"/></linearGradient></defs><rect x="1.5" y="1.5" width="13" height="13" rx="1.8" fill="url(#fg248_367)" stroke="#fa9c1e" stroke-width="1.5"/><circle cx="5.3" cy="10.8" r="1.2" fill="#fa9c1e"/><path d="M4,7.4 A4.2,4.2 0 0 1 8.6,12 M4,4.5 A7.2,7.2 0 0 1 11.5,12" stroke="#fa9c1e" stroke-width="1.6" fill="none"/></svg>
<div class="t" style="left:275px;top:369.94px;font-size:12px;line-height:12px;color:#000;letter-spacing:-0.123px">Obhajoba disertační práce (Ing. Štěpán Kratochvíl)</div>
<svg width="16" height="16" style="left:248px;top:389px"><defs><linearGradient id="fg248_389" x1="0" y1="0" x2="0" y2="1"><stop offset="0" stop-color="#ffffff"/><stop offset="1" stop-color="#e9eef4"/></linearGradient></defs><rect x="1.5" y="1.5" width="13" height="13" rx="1.8" fill="url(#fg248_389)" stroke="#fa9c1e" stroke-width="1.5"/><circle cx="5.3" cy="10.8" r="1.2" fill="#fa9c1e"/><path d="M4,7.4 A4.2,4.2 0 0 1 8.6,12 M4,4.5 A7.2,7.2 0 0 1 11.5,12" stroke="#fa9c1e" stroke-width="1.6" fill="none"/></svg>
<div class="t" style="left:275px;top:391.94px;font-size:12px;line-height:12px;color:#000;letter-spacing:-0.184px">Obhajoba disertační práce (RNDr. Jan Tožička)</div>
<svg width="16" height="16" style="left:248px;top:411px"><defs><linearGradient id="fg248_411" x1="0" y1="0" x2="0" y2="1"><stop offset="0" stop-color="#ffffff"/><stop offset="1" stop-color="#e9eef4"/></linearGradient></defs><rect x="1.5" y="1.5" width="13" height="13" rx="1.8" fill="url(#fg248_411)" stroke="#fa9c1e" stroke-width="1.5"/><circle cx="5.3" cy="10.8" r="1.2" fill="#fa9c1e"/><path d="M4,7.4 A4.2,4.2 0 0 1 8.6,12 M4,4.5 A7.2,7.2 0 0 1 11.5,12" stroke="#fa9c1e" stroke-width="1.6" fill="none"/></svg>
<div class="t" style="left:275px;top:413.94px;font-size:12px;line-height:12px;color:#000;letter-spacing:-0.364px">ROBOSOUTĚŽ pro střední školy</div>
<svg width="16" height="16" style="left:248px;top:433px"><defs><linearGradient id="fg248_433" x1="0" y1="0" x2="0" y2="1"><stop offset="0" stop-color="#ffffff"/><stop offset="1" stop-color="#e9eef4"/></linearGradient></defs><rect x="1.5" y="1.5" width="13" height="13" rx="1.8" fill="url(#fg248_433)" stroke="#fa9c1e" stroke-width="1.5"/><circle cx="5.3" cy="10.8" r="1.2" fill="#fa9c1e"/><path d="M4,7.4 A4.2,4.2 0 0 1 8.6,12 M4,4.5 A7.2,7.2 0 0 1 11.5,12" stroke="#fa9c1e" stroke-width="1.6" fill="none"/></svg>
<div class="t" style="left:275px;top:435.94px;font-size:12px;line-height:12px;color:#000;letter-spacing:-0.364px">ROBOSOUTĚŽ pro střední školy</div>
<svg width="16" height="16" style="left:248px;top:455px"><defs><linearGradient id="fg248_455" x1="0" y1="0" x2="0" y2="1"><stop offset="0" stop-color="#ffffff"/><stop offset="1" stop-color="#e9eef4"/></linearGradient></defs><rect x="1.5" y="1.5" width="13" height="13" rx="1.8" fill="url(#fg248_455)" stroke="#fa9c1e" stroke-width="1.5"/><circle cx="5.3" cy="10.8" r="1.2" fill="#fa9c1e"/><path d="M4,7.4 A4.2,4.2 0 0 1 8.6,12 M4,4.5 A7.2,7.2 0 0 1 11.5,12" stroke="#fa9c1e" stroke-width="1.6" fill="none"/></svg>
<div class="t" style="left:275px;top:457.94px;font-size:12px;line-height:12px;color:#000;letter-spacing:-0.159px">Obhajoba disertační práce (Ing. Marek Sedláček)</div>
<svg width="16" height="16" style="left:248px;top:477px"><defs><linearGradient id="fg248_477" x1="0" y1="0" x2="0" y2="1"><stop offset="0" stop-color="#ffffff"/><stop offset="1" stop-color="#e9eef4"/></linearGradient></defs><rect x="1.5" y="1.5" width="13" height="13" rx="1.8" fill="url(#fg248_477)" stroke="#fa9c1e" stroke-width="1.5"/><circle cx="5.3" cy="10.8" r="1.2" fill="#fa9c1e"/><path d="M4,7.4 A4.2,4.2 0 0 1 8.6,12 M4,4.5 A7.2,7.2 0 0 1 11.5,12" stroke="#fa9c1e" stroke-width="1.6" fill="none"/></svg>
<div class="t" style="left:275px;top:479.94px;font-size:12px;line-height:12px;color:#000;letter-spacing:-0.364px">ROBOSOUTĚŽ pro střední školy</div>
<svg width="16" height="16" style="left:248px;top:499px"><defs><linearGradient id="fg248_499" x1="0" y1="0" x2="0" y2="1"><stop offset="0" stop-color="#ffffff"/><stop offset="1" stop-color="#e9eef4"/></linearGradient></defs><rect x="1.5" y="1.5" width="13" height="13" rx="1.8" fill="url(#fg248_499)" stroke="#fa9c1e" stroke-width="1.5"/><circle cx="5.3" cy="10.8" r="1.2" fill="#fa9c1e"/><path d="M4,7.4 A4.2,4.2 0 0 1 8.6,12 M4,4.5 A7.2,7.2 0 0 1 11.5,12" stroke="#fa9c1e" stroke-width="1.6" fill="none"/></svg>
<div class="t" style="left:275px;top:501.94px;font-size:12px;line-height:12px;color:#000;letter-spacing:-0.515px">17. řádné zasedání AS FEL</div>
<svg width="16" height="16" style="left:248px;top:521px"><defs><linearGradient id="fg248_521" x1="0" y1="0" x2="0" y2="1"><stop offset="0" stop-color="#ffffff"/><stop offset="1" stop-color="#e9eef4"/></linearGradient></defs><rect x="1.5" y="1.5" width="13" height="13" rx="1.8" fill="url(#fg248_521)" stroke="#fa9c1e" stroke-width="1.5"/><circle cx="5.3" cy="10.8" r="1.2" fill="#fa9c1e"/><path d="M4,7.4 A4.2,4.2 0 0 1 8.6,12 M4,4.5 A7.2,7.2 0 0 1 11.5,12" stroke="#fa9c1e" stroke-width="1.6" fill="none"/></svg>
<div class="t" style="left:275px;top:523.94px;font-size:12px;line-height:12px;color:#000;letter-spacing:-0.364px">ROBOSOUTĚŽ pro střední školy</div>
<svg width="16" height="16" style="left:248px;top:543px"><defs><linearGradient id="fg248_543" x1="0" y1="0" x2="0" y2="1"><stop offset="0" stop-color="#ffffff"/><stop offset="1" stop-color="#e9eef4"/></linearGradient></defs><rect x="1.5" y="1.5" width="13" height="13" rx="1.8" fill="url(#fg248_543)" stroke="#fa9c1e" stroke-width="1.5"/><circle cx="5.3" cy="10.8" r="1.2" fill="#fa9c1e"/><path d="M4,7.4 A4.2,4.2 0 0 1 8.6,12 M4,4.5 A7.2,7.2 0 0 1 11.5,12" stroke="#fa9c1e" stroke-width="1.6" fill="none"/></svg>
<div class="t" style="left:275px;top:545.94px;font-size:12px;line-height:12px;color:#000;letter-spacing:-0.263px">Den otevřených dveří FEL</div>
<svg width="16" height="16" style="left:248px;top:565px"><defs><linearGradient id="fg248_565" x1="0" y1="0" x2="0" y2="1"><stop offset="0" stop-color="#ffffff"/><stop offset="1" stop-color="#e9eef4"/></linearGradient></defs><rect x="1.5" y="1.5" width="13" height="13" rx="1.8" fill="url(#fg248_565)" stroke="#fa9c1e" stroke-width="1.5"/><circle cx="5.3" cy="10.8" r="1.2" fill="#fa9c1e"/><path d="M4,7.4 A4.2,4.2 0 0 1 8.6,12 M4,4.5 A7.2,7.2 0 0 1 11.5,12" stroke="#fa9c1e" stroke-width="1.6" fill="none"/></svg>
<div class="t" style="left:275px;top:567.94px;font-size:12px;line-height:12px;color:#000;letter-spacing:-0.263px">Den otevřených dveří FEL</div>
<svg width="16" height="16" style="left:248px;top:587px"><defs><linearGradient id="fg248_587" x1="0" y1="0" x2="0" y2="1"><stop offset="0" stop-color="#ffffff"/><stop offset="1" stop-color="#e9eef4"/></linearGradient></defs><rect x="1.5" y="1.5" width="13" height="13" rx="1.8" fill="url(#fg248_587)" stroke="#fa9c1e" stroke-width="1.5"/><circle cx="5.3" cy="10.8" r="1.2" fill="#fa9c1e"/><path d="M4,7.4 A4.2,4.2 0 0 1 8.6,12 M4,4.5 A7.2,7.2 0 0 1 11.5,12" stroke="#fa9c1e" stroke-width="1.6" fill="none"/></svg>
<div class="t" style="left:275px;top:589.94px;font-size:12px;line-height:12px;color:#000;letter-spacing:-0.036px">28. symposium o fyzice plazmatu a plazmových technologií...</div>
<div class="a" style="left:271px;top:608px;width:356px;height:1px;background:#d7d7d7"></div>
<div class="t" style="left:275px;top:617.14px;font-size:12px;line-height:12px;color:#000;letter-spacing:-0.127px">Otevřít vše v panelech</div>
</body></html>
